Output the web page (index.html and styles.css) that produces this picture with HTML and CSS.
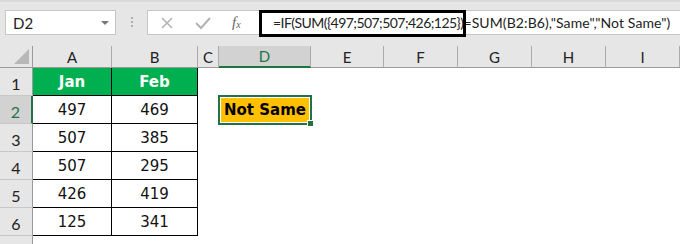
FILE: index.html
```html
<!DOCTYPE html>
<html lang="en">
<head>
    <meta charset="UTF-8">
    <title>Excel - Not Same</title>
    <link rel="stylesheet" href="styles.css">
</head>
<body>
    <div class="toolbar">
        <div class="name-box">
            <span>D2</span>
            <span class="arrow"></span>
        </div>
        <div class="dots"><i></i><i></i><i></i></div>
        <div class="formula-bar">
            <div class="fb-icons">
                <svg width="14" height="14" viewBox="0 0 14 14"><path d="M2 2L12 12M12 2L2 12" stroke="#b3b3b3" stroke-width="1.6" fill="none"/></svg>
                <svg width="18" height="14" viewBox="0 0 18 14"><path d="M2 7L7 12L16 2" stroke="#b3b3b3" stroke-width="2" fill="none"/></svg>
                <span class="fx">f<sub>x</sub></span>
            </div>
            <div class="fb-text"><span class="part1">=IF(SUM({497;507;507;426;125})</span><span class="part2">=SUM(B2:B6),"Same","Not Same")</span></div>
        </div>
        <div class="highlight"></div>
    </div>

    <div class="sheet">
        <!-- header row -->
        <div class="ch corner"><span class="tri"></span></div>
        <div class="ch">A</div>
        <div class="ch">B</div>
        <div class="ch">C</div>
        <div class="ch active">D</div>
        <div class="ch">E</div>
        <div class="ch">F</div>
        <div class="ch">G</div>
        <div class="ch">H</div>
        <div class="ch">I</div>

        <!-- row 1 -->
        <div class="rh">1</div>
        <div class="c head">Jan</div>
        <div class="c head">Feb</div>
        <div class="e"></div><div class="e"></div><div class="e"></div><div class="e"></div><div class="e"></div><div class="e"></div><div class="e"></div>

        <!-- row 2 -->
        <div class="rh active">2</div>
        <div class="c">497</div>
        <div class="c">469</div>
        <div class="e"></div>
        <div class="e sel"><div class="result">Not Same</div><span class="handle"></span></div>
        <div class="e"></div><div class="e"></div><div class="e"></div><div class="e"></div><div class="e"></div>

        <!-- row 3 -->
        <div class="rh">3</div>
        <div class="c">507</div>
        <div class="c">385</div>
        <div class="e"></div><div class="e"></div><div class="e"></div><div class="e"></div><div class="e"></div><div class="e"></div><div class="e"></div>

        <!-- row 4 -->
        <div class="rh">4</div>
        <div class="c">507</div>
        <div class="c">295</div>
        <div class="e"></div><div class="e"></div><div class="e"></div><div class="e"></div><div class="e"></div><div class="e"></div><div class="e"></div>

        <!-- row 5 -->
        <div class="rh">5</div>
        <div class="c">426</div>
        <div class="c">419</div>
        <div class="e"></div><div class="e"></div><div class="e"></div><div class="e"></div><div class="e"></div><div class="e"></div><div class="e"></div>

        <!-- row 6 -->
        <div class="rh">6</div>
        <div class="c">125</div>
        <div class="c">341</div>
        <div class="e"></div><div class="e"></div><div class="e"></div><div class="e"></div><div class="e"></div><div class="e"></div><div class="e"></div>

        <!-- row 7 (cut off) -->
        <div class="rh last"></div>
    </div>
</body>
</html>
```

FILE: styles.css
```css
body {
    margin: 0;
    padding: 0;
    width: 680px;
    height: 244px;
    overflow: hidden;
    background: #fff;
    font-family: Lato, "Open Sans", sans-serif;
}
.toolbar {
    position: relative;
    display: flex;
    align-items: flex-start;
    height: 46px;
    box-sizing: border-box;
    padding-top: 8px;
    background: #e6e6e6;
    border-top: 2px solid #dadada;
    overflow: hidden;
}
.name-box {
    flex-shrink: 0;
    display: flex;
    align-items: center;
    justify-content: space-between;
    margin-left: 5px;
    width: 111px;
    height: 25px;
    box-sizing: border-box;
    padding: 0 6px 0 7px;
    background: #fff;
    border: 1px solid #c6c6c6;
    font-size: 15px;
    color: #222;
}
.arrow {
    width: 0;
    height: 0;
    border-left: 4px solid transparent;
    border-right: 4px solid transparent;
    border-top: 4px solid #777;
}
.dots {
    flex-shrink: 0;
    width: 31px;
    display: flex;
    flex-direction: column;
    align-items: center;
    gap: 2px;
    padding-top: 7px;
}
.dots i {
    display: block;
    width: 2px;
    height: 2px;
    background: #b0b0b0;
}
.formula-bar {
    flex-shrink: 0;
    display: flex;
    align-items: center;
    height: 25px;
    width: 560px;
    box-sizing: border-box;
    background: #fff;
    border: 1px solid #c6c6c6;
}
.fb-icons {
    flex-shrink: 0;
    display: flex;
    align-items: center;
    width: 112px;
    padding-left: 12px;
    gap: 20px;
    box-sizing: border-box;
}
.fx {
    font-family: "Liberation Serif", serif;
    font-style: italic;
    font-size: 15px;
    color: #666;
}
.fx sub {
    font-size: 10px;
    vertical-align: -1px;
}
.fb-text {
    padding-left: 13px;
    font-size: 14px;
    color: #222;
    white-space: nowrap;
}
.part1 {
    letter-spacing: -0.55px;
}
.part2 {
    letter-spacing: 0.1px;
}
.highlight {
    position: absolute;
    left: 259px;
    top: 8px;
    width: 207px;
    height: 27px;
    border: 3px solid #000;
    box-sizing: border-box;
}

.sheet {
    display: grid;
    grid-template-columns: 33px 79px 86px 21px 92px 73px 74px 74px 74px 74px;
    grid-template-rows: 22px repeat(6, 28px) 8px;
}
.ch {
    position: relative;
    background: #e6e6e6;
    border-right: 1px solid #ababab;
    border-bottom: 1px solid #9b9b9b;
    box-sizing: border-box;
    display: flex;
    align-items: center;
    justify-content: center;
    font-size: 15px;
    color: #222;
}
.ch.corner {
    border-right-color: #9b9b9b;
}
.tri {
    position: absolute;
    right: 3px;
    bottom: 3px;
    width: 0;
    height: 0;
    border-left: 15px solid transparent;
    border-bottom: 15px solid #b8b8b8;
}
.ch.active {
    background: #d2d2d2;
    border-bottom: 2px solid #217346;
    color: #217346;
}
.rh {
    grid-column: 1;
    background: #e6e6e6;
    border-right: 1px solid #9b9b9b;
    border-bottom: 1px solid #c8c8c8;
    box-sizing: border-box;
    display: flex;
    align-items: flex-end;
    justify-content: center;
    padding-bottom: 2px;
    font-size: 16px;
    color: #222;
}
.rh.last {
    border-bottom: none;
}
.rh.active {
    background: #d2d2d2;
    border-right: 2px solid #217346;
    color: #217346;
}
.c {
    border-right: 1px solid #000;
    border-bottom: 1px solid #000;
    box-sizing: border-box;
    display: flex;
    align-items: center;
    justify-content: center;
    font-family: "DejaVu Sans", sans-serif;
    font-size: 15px;
    color: #111;
}
.c.head {
    background: #00b050;
    color: #fff;
    font-weight: bold;
}
.e {
    position: relative;
}
.sel {
    margin: -1px -1px;
    border: 2px solid #217346;
    padding: 1px;
}
.result {
    height: 100%;
    background: #ffc000;
    display: flex;
    align-items: center;
    justify-content: center;
    font-family: "DejaVu Sans", sans-serif;
    font-weight: bold;
    font-size: 15px;
    color: #000;
}
.handle {
    position: absolute;
    right: -4px;
    bottom: -4px;
    width: 5px;
    height: 5px;
    background: #217346;
    border: 1px solid #fff;
}
```
